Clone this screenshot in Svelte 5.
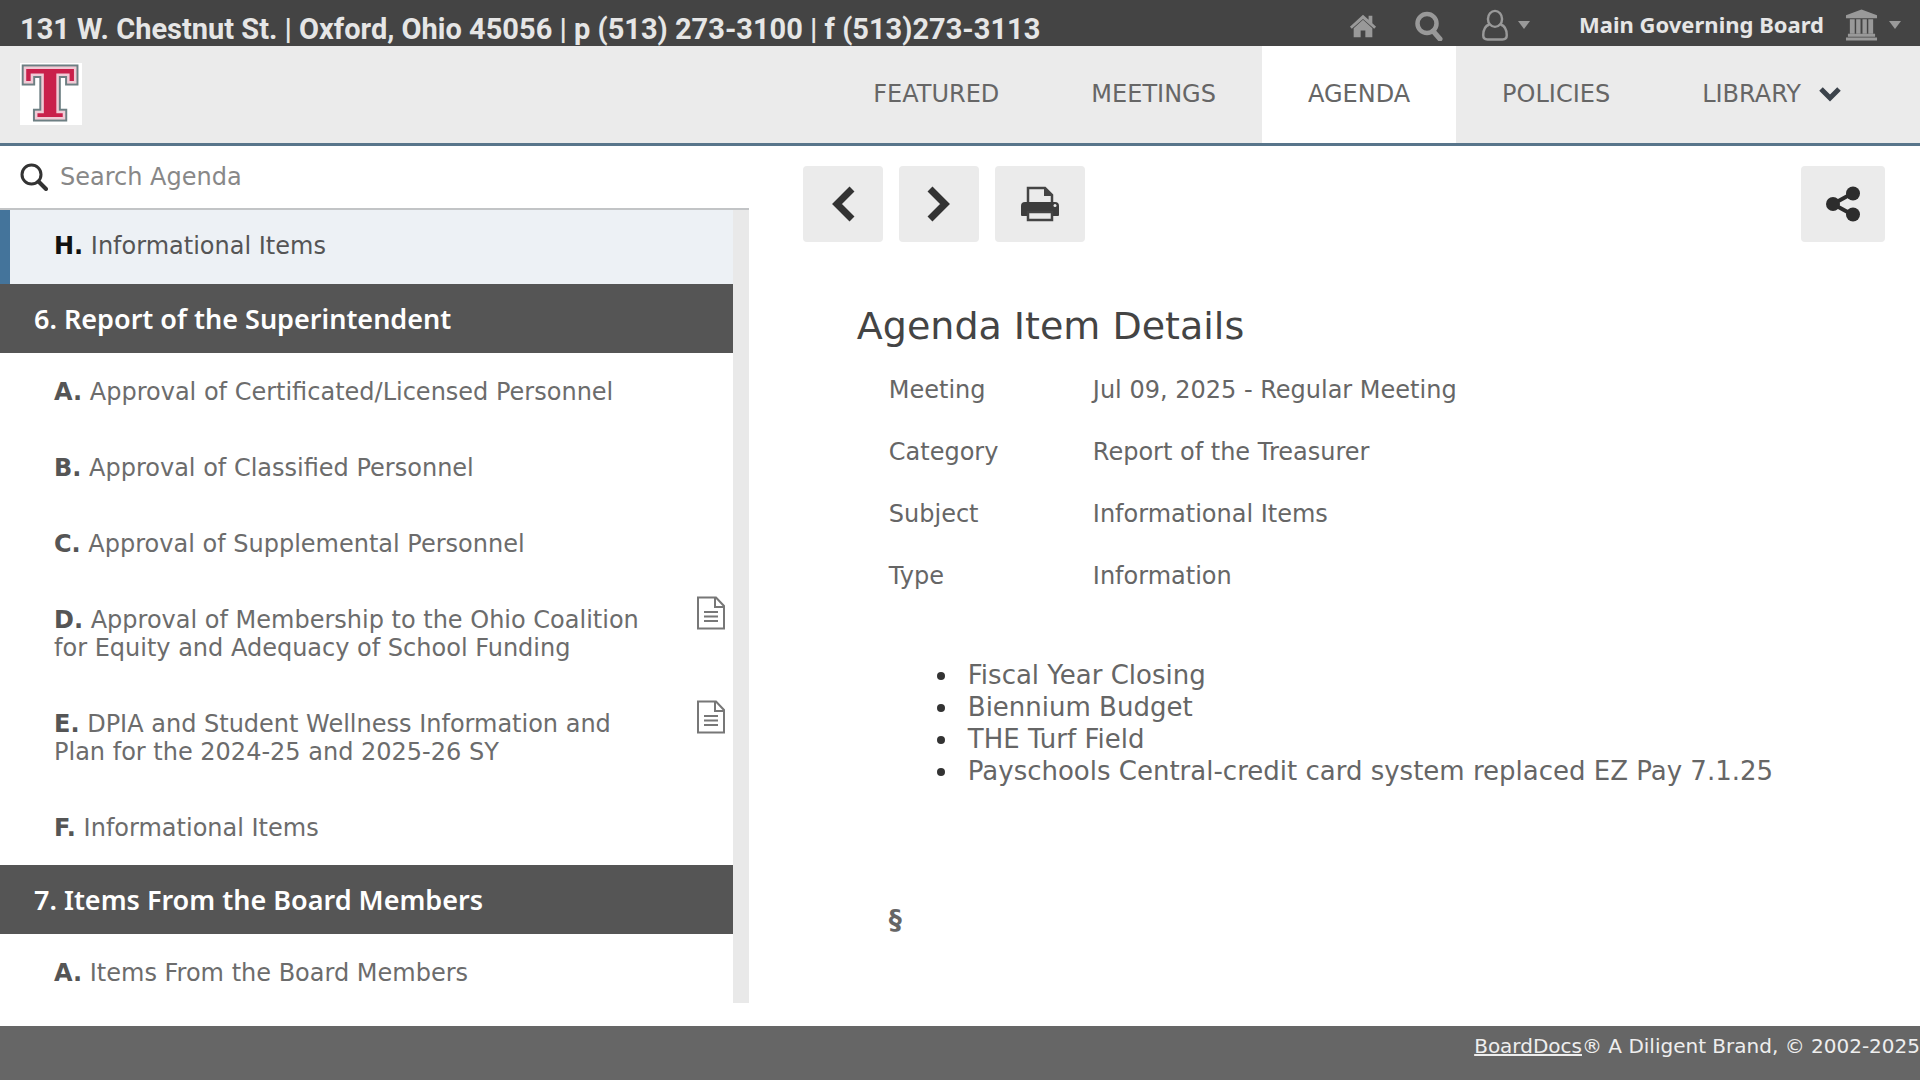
<script>
  const address = '131 W. Chestnut St. | Oxford, Ohio 45056 | p (513) 273-3100 | f (513)273-3113';
  const tabs = ['Featured', 'Meetings', 'Agenda', 'Policies', 'Library'];

  const groups = [
    {
      title: '',
      items: [{ id: '5H', letter: 'H.', title: 'Informational Items' }]
    },
    {
      title: '6. Report of the Superintendent',
      items: [
        { id: '6A', letter: 'A.', title: 'Approval of Certificated/Licensed Personnel' },
        { id: '6B', letter: 'B.', title: 'Approval of Classified Personnel' },
        { id: '6C', letter: 'C.', title: 'Approval of Supplemental Personnel' },
        { id: '6D', letter: 'D.', title: 'Approval of Membership to the Ohio Coalition for Equity and Adequacy of School Funding', file: true },
        { id: '6E', letter: 'E.', title: 'DPIA and Student Wellness Information and Plan for the 2024-25 and 2025-26 SY', file: true },
        { id: '6F', letter: 'F.', title: 'Informational Items' }
      ]
    },
    {
      title: '7. Items From the Board Members',
      items: [{ id: '7A', letter: 'A.', title: 'Items From the Board Members' }]
    }
  ];

  const details = [
    ['Meeting', 'Jul 09, 2025 - Regular Meeting'],
    ['Category', 'Report of the Treasurer'],
    ['Subject', 'Informational Items'],
    ['Type', 'Information']
  ];

  const notes = [
    'Fiscal Year Closing',
    'Biennium Budget',
    'THE Turf Field',
    'Payschools Central-credit card system replaced EZ Pay 7.1.25'
  ];

  let activeTab = $state('Agenda');
  let selected = $state('5H');
  let query = $state('');
</script>

<div class="app">
  <div class="topbar">
    <span class="address">{address}</span>
    <div class="tools">
      <button class="tool" aria-label="Home">
        <svg width="28" height="32" viewBox="0 0 30 32">
          <path d="M15 5 L1 18 L3 20 L15 9.500 L27 20 L29 18 L25 14 V6 H21 V10.500 Z" />
          <path d="M15 10.500 L5 19.500 V29 H12.500 V22 H17.500 V29 H25 V19.500 Z" />
        </svg>
      </button>
      <button class="tool" aria-label="Search">
        <svg width="30" height="32" viewBox="0 0 30 32">
          <circle cx="13" cy="14.500" r="9.500" fill="none" stroke="currentColor" stroke-width="4.500" />
          <path d="M19 22 L26 30" stroke="currentColor" stroke-width="5" stroke-linecap="round" />
        </svg>
      </button>
      <button class="tool user" aria-label="Account">
        <svg width="28" height="32" viewBox="0 0 28 34" fill="none" stroke="currentColor" stroke-width="2.600">
          <ellipse cx="14" cy="10.500" rx="7.500" ry="8.500" />
          <path d="M8 16.500 C3.500 18 1.500 22 1.500 28 C1.500 31 3 32.500 6 32.500 H22 C25 32.500 26.500 31 26.500 28 C26.500 22 24.500 18 20 16.500" />
        </svg>
        <svg class="caret" width="12" height="8" viewBox="0 0 12 8"><path d="M0 0 H12 L6 8 Z" /></svg>
      </button>
      <button class="tool board">
        <span>Main Governing Board</span>
        <svg width="33" height="32" viewBox="0 0 34 32">
          <path d="M17 0 L33 6 V9 H1 V6 Z" />
          <path d="M5 10 H10 V25 H5 Z M11.500 10 H16 V25 H11.500 Z M18 10 H22.500 V25 H18 Z M24 10 H29 V25 H24 Z" />
          <path d="M3 25 H31 V28 H3 Z M1 29 H33 V32 H1 Z" />
        </svg>
        <svg class="caret" width="12" height="8" viewBox="0 0 12 8"><path d="M0 0 H12 L6 8 Z" /></svg>
      </button>
    </div>
  </div>

  <header class="header">
    <a class="logo" href="#home" aria-label="District home">
      <svg width="62" height="62" viewBox="0 0 62 62">
        <rect width="62" height="62" fill="#fff" />
        <g font-family="DejaVu Serif, serif" font-weight="bold" font-size="66" text-anchor="middle" stroke-linejoin="miter">
          <text x="30" y="54" fill="#6d7f83" stroke="#6d7f83" stroke-width="9">T</text>
          <text x="30" y="54" fill="#c9204b" stroke="#f0cbd6" stroke-width="5" paint-order="stroke">T</text>
        </g>
      </svg>
    </a>
    <nav class="tabs">
      {#each tabs as tab}
        <a href="#{tab.toLowerCase()}" class:active={tab === activeTab} onclick={() => (activeTab = tab)}>
          {tab}
          {#if tab === 'Library'}
            <svg width="22" height="16" viewBox="0 0 22 16">
              <path d="M2 3 L11 12 L20 3" fill="none" stroke="#3c434b" stroke-width="5" />
            </svg>
          {/if}
        </a>
      {/each}
    </nav>
  </header>

  <main class="main">
    <aside class="sidebar">
      <label class="search">
        <svg width="28" height="28" viewBox="0 0 28 28" fill="none" stroke="#333">
          <circle cx="11.500" cy="11.500" r="9.500" stroke-width="3" />
          <path d="M18.500 18.500 L26 26" stroke-width="4" stroke-linecap="round" />
        </svg>
        <input type="text" placeholder="Search Agenda" aria-label="Search Agenda" bind:value={query} />
      </label>
      <div class="agenda">
        {#each groups as group}
          {#if group.title}
            <h2 class="category">{group.title}</h2>
          {/if}
          {#each group.items as item (item.id)}
            <button class="item" class:selected={item.id === selected} onclick={() => (selected = item.id)}>
              <span class="title"><b>{item.letter}</b> {item.title}</span>
              {#if item.file}
                <svg class="file" width="30" height="34" viewBox="0 0 30 34" fill="none" stroke="#777" stroke-width="2">
                  <path d="M2 1.500 H20 L28 10 V32.500 H2 Z" />
                  <path d="M19 1.500 V11 H28" />
                  <path d="M8 16 H22 M8 20.500 H22 M8 25 H22" />
                </svg>
              {/if}
            </button>
          {/each}
        {/each}
      </div>
    </aside>

    <section class="content">
      <div class="toolbar">
        <button aria-label="Previous">
          <svg width="24" height="36" viewBox="0 0 24 36"><path d="M21 3 L6 18 L21 33" fill="none" stroke="#333" stroke-width="7" /></svg>
        </button>
        <button aria-label="Next">
          <svg width="24" height="36" viewBox="0 0 24 36"><path d="M3 3 L18 18 L3 33" fill="none" stroke="#333" stroke-width="7" /></svg>
        </button>
        <button class="print" aria-label="Print">
          <svg width="38" height="36" viewBox="0 0 38 36">
            <path d="M7 18 V2 H24 L31 9 V18" fill="none" stroke="#444" stroke-width="2.500" />
            <path d="M23 1 L32 10 H23 Z" fill="#444" />
            <path d="M4 16 H34 Q38 16 38 20 V29 Q38 30 37 30 H1 Q0 30 0 29 V20 Q0 16 4 16 Z" fill="#3d3d3d" />
            <path d="M7 26 H31 V34 H7 Z" fill="#ebebeb" stroke="#444" stroke-width="2.500" />
            <circle cx="34" cy="19.500" r="1.500" fill="#ebebeb" />
          </svg>
        </button>
        <button class="share" aria-label="Share">
          <svg width="36" height="36" viewBox="0 0 36 36" fill="#2d2d2d">
            <path d="M28 7 L8 18 L28 29" fill="none" stroke="#2d2d2d" stroke-width="4" />
            <circle cx="28" cy="7.500" r="7" />
            <circle cx="8" cy="18" r="7" />
            <circle cx="28" cy="28.500" r="7" />
          </svg>
        </button>
      </div>

      <article class="details">
        <h1>Agenda Item Details</h1>
        <dl>
          {#each details as [name, value]}
            <dt>{name}</dt>
            <dd>{value}</dd>
          {/each}
        </dl>
        <ul>
          {#each notes as note}
            <li>{note}</li>
          {/each}
        </ul>
        <p class="mark">§</p>
      </article>
    </section>
  </main>

  <footer class="footer">
    <a href="#boarddocs">BoardDocs</a>® A Diligent Brand, © 2002-2025
  </footer>
</div>

<style>
  :global(body) {
    background: #fff;
  }

  .app {
    display: flex;
    flex-direction: column;
    height: 100vh;
    overflow: hidden;
    font-family: 'DejaVu Sans', Verdana, sans-serif;
    font-size: 24px;
    line-height: 28px;
    color: #666;
  }

  button {
    padding: 0;
    border: 0;
    background: none;
    color: inherit;
    font: inherit;
    cursor: pointer;
  }

  svg {
    display: block;
    flex: none;
  }

  a {
    color: inherit;
    text-decoration: none;
  }

  .topbar {
    display: flex;
    align-items: center;
    justify-content: space-between;
    height: 46px;
    flex: none;
    padding: 0 19px 0 20px;
    box-sizing: border-box;
    background: #444;
  }

  .address {
    padding-top: 12px;
    font-family: Roboto, sans-serif;
    font-size: 29px;
    font-weight: 700;
    line-height: 34px;
    color: #e6e6e6;
    white-space: nowrap;
  }

  .tools {
    display: flex;
    align-items: center;
    gap: 37px;
    padding-top: 4px;
  }

  .tool {
    display: flex;
    align-items: center;
    color: #999;
  }

  .tool svg {
    fill: currentColor;
  }

  .user svg:first-child,
  .tool [fill='none'] {
    fill: none;
  }

  .user {
    gap: 9px;
  }

  .board {
    gap: 11px;
    margin-left: 12px;
  }

  .board span {
    margin: -2px 10px 0 0;
    font-family: 'Noto Sans', sans-serif;
    font-size: 22px;
    font-weight: 700;
    color: #e6e6e6;
  }

  .header {
    display: flex;
    justify-content: space-between;
    flex: none;
    padding: 0 33px 0 20px;
    background: #ebebeb;
    border-bottom: 3px solid #58758b;
  }

  .logo {
    padding-top: 17px;
  }

  .logo svg {
    overflow: visible;
  }

  .tabs {
    display: flex;
  }

  .tabs a {
    display: flex;
    align-items: center;
    gap: 18px;
    padding: 34px 46px 35px;
    text-transform: uppercase;
  }

  .tabs a.active {
    background: #fff;
  }

  .main {
    display: flex;
    flex: 1;
    min-height: 0;
  }

  .sidebar {
    display: flex;
    flex-direction: column;
    flex: 0 0 39%;
    padding-bottom: 23px;
    box-sizing: border-box;
  }

  .search {
    display: flex;
    align-items: center;
    gap: 12px;
    height: 62px;
    flex: none;
    padding: 0 20px;
    border-bottom: 2px solid #c2c4c6;
    box-sizing: content-box;
  }

  .search input {
    flex: 1;
    padding: 0;
    border: 0;
    outline: none;
    font: inherit;
    color: #555;
  }

  .search input::placeholder {
    color: #888;
  }

  .agenda {
    flex: 1;
    min-height: 0;
    overflow-y: auto;
    scrollbar-width: none;
    border-right: 16px solid #e9e9e9;
  }

  .category {
    margin: 0;
    padding: 21px 34px 20px;
    background: #555;
    font-family: 'Noto Sans', sans-serif;
    font-size: 27px;
    font-weight: 600;
    line-height: 28px;
    color: #fff;
  }

  .item {
    display: flex;
    justify-content: space-between;
    align-items: flex-start;
    gap: 40px;
    width: 100%;
    padding: 25px 7px 23px 54px;
    text-align: left;
    color: #6c6c6c;
  }

  .item b {
    color: #555;
  }

  .item.selected {
    padding: 22px 7px 24px 44px;
    background: #edf1f5;
    border-left: 10px solid #44749b;
    color: #555;
  }

  .item.selected b {
    color: #111;
  }

  .file {
    margin-top: -10px;
  }

  .content {
    flex: 1;
    min-width: 0;
    padding: 20px 35px 0 54px;
  }

  .toolbar {
    display: flex;
    gap: 16px;
  }

  .toolbar button {
    display: flex;
    align-items: center;
    justify-content: center;
    width: 80px;
    height: 76px;
    border-radius: 4px;
    background: #ebebeb;
  }

  .toolbar .print {
    width: 90px;
  }

  .toolbar .share {
    width: 84px;
    margin-left: auto;
  }

  .details {
    padding: 62px 0 0 54px;
  }

  h1 {
    margin: 0 0 28px;
    font-size: 38px;
    font-weight: normal;
    line-height: 44px;
    color: #444;
  }

  dl {
    display: grid;
    grid-template-columns: 204px 1fr;
    row-gap: 34px;
    margin: 0 0 69px 32px;
  }

  dd {
    margin: 0;
  }

  ul {
    margin: 0 0 119px;
    padding-left: 103px;
    font-size: 26px;
    line-height: 32px;
  }

  li {
    padding-left: 8px;
  }

  li::marker {
    color: #333;
  }

  .mark {
    margin: 0 0 0 32px;
    font-size: 26px;
    font-weight: bold;
  }

  .footer {
    flex: none;
    height: 54px;
    padding-top: 6px;
    box-sizing: border-box;
    background: #666;
    font-size: 20px;
    text-align: right;
    color: #eee;
  }

  .footer a {
    text-decoration: underline;
  }
</style>
